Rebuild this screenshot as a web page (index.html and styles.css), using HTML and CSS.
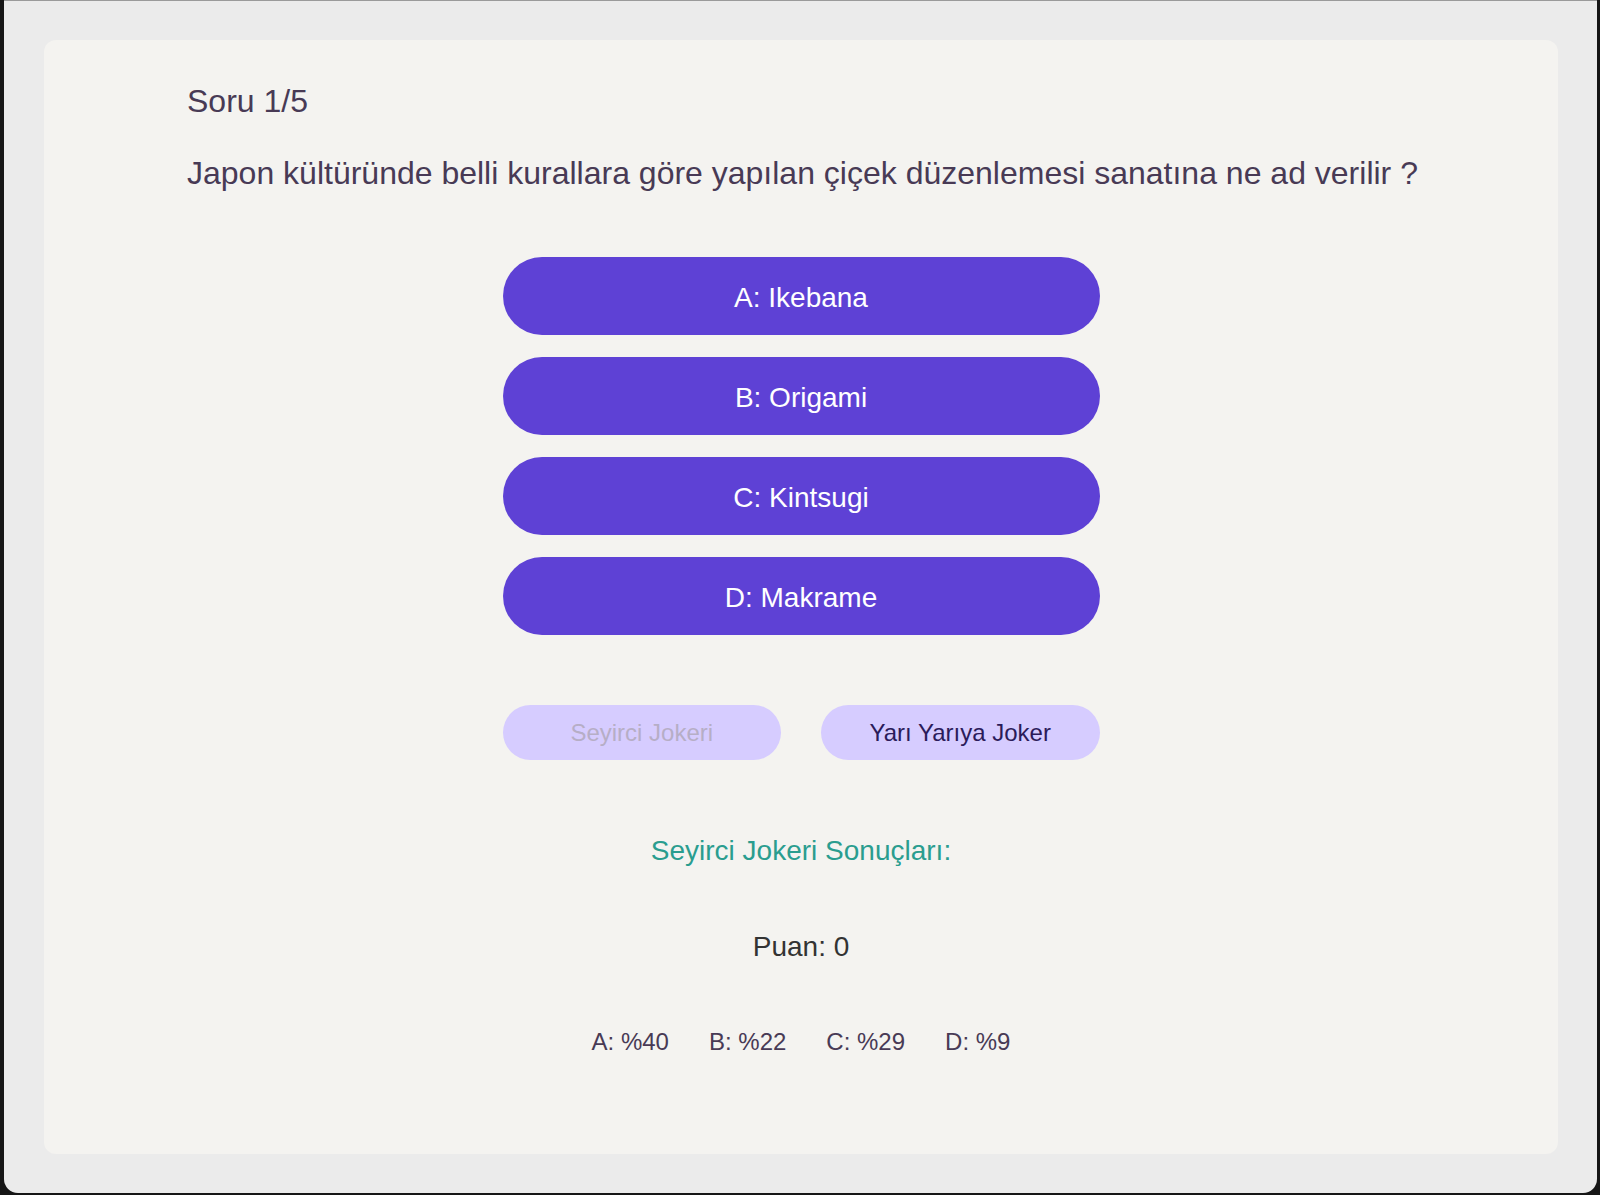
FILE: index.html
```html
<!DOCTYPE html>
<html lang="tr">
<head>
<meta charset="utf-8">
<title>Quiz</title>
<link rel="stylesheet" href="styles.css">
</head>
<body>
<div class="window">
  <main class="card">
    <div class="quiz">
      <h2 class="counter">Soru 1/5</h2>
      <p class="question">Japon kültüründe belli kurallara göre yapılan çiçek düzenlemesi sanatına ne ad verilir ?</p>
      <div class="answers">
        <button class="answer">A: Ikebana</button>
        <button class="answer">B: Origami</button>
        <button class="answer">C: Kintsugi</button>
        <button class="answer">D: Makrame</button>
      </div>
      <div class="jokers">
        <button class="joker joker-used" disabled>Seyirci Jokeri</button>
        <button class="joker">Yarı Yarıya Joker</button>
      </div>
      <h3 class="results-title">Seyirci Jokeri Sonuçları:</h3>
      <p class="score">Puan: 0</p>
      <div class="results">
        <span class="result">A: %40</span>
        <span class="result">B: %22</span>
        <span class="result">C: %29</span>
        <span class="result">D: %9</span>
      </div>
    </div>
  </main>
</div>
</body>
</html>
```
FILE: styles.css
```css
* {
  box-sizing: border-box;
}

html, body {
  margin: 0;
  padding: 0;
  height: 1195px;
  overflow: hidden;
}

body {
  background: #161616;
  font-family: "Liberation Sans", Arial, sans-serif;
}

.window {
  margin: 0 3px 0 4px;
  height: 1193px;
  background: #ebebeb;
  border-top: 1px solid #9a9a9a;
  border-radius: 0 0 14px 14px;
  padding: 39px 39px 39px 40px;
  display: flex;
}

.card {
  flex: 1;
  min-width: 0;
  background: #f4f3f0;
  border-radius: 12px;
  padding: 43px 143px 0 143px;
}

.quiz {
  min-width: 0;
  display: flex;
  flex-direction: column;
}

.counter {
  margin: 0;
  font-size: 32px;
  line-height: 36px;
  font-weight: normal;
  color: #483a55;
}

.question {
  margin: 36px 0 0;
  font-size: 32px;
  line-height: 36px;
  color: #483a55;
  white-space: nowrap;
}

.answers {
  margin-top: 66px;
  align-self: center;
  width: 597px;
  display: flex;
  flex-direction: column;
  gap: 22px;
}

.answer {
  height: 78px;
  border: none;
  border-radius: 40px;
  background: #5e41d5;
  color: #ffffff;
  font-family: inherit;
  font-size: 28px;
  padding: 3px 0 0;
  display: flex;
  align-items: center;
  justify-content: center;
}

.jokers {
  margin-top: 70px;
  align-self: center;
  width: 597px;
  display: flex;
  gap: 40px;
}

.joker {
  flex: 1;
  height: 55px;
  border: none;
  border-radius: 28px;
  background: #d6ccff;
  color: #2b1b5a;
  font-family: inherit;
  font-size: 24px;
  padding: 0;
}

.joker-used {
  color: #b6aec6;
}

.results-title {
  margin: 75px 0 0;
  text-align: center;
  font-size: 28px;
  line-height: 32px;
  font-weight: normal;
  color: #2a9d8f;
}

.score {
  margin: 64px 0 0;
  text-align: center;
  font-size: 28px;
  line-height: 32px;
  color: #333333;
}

.results {
  margin-top: 65px;
  display: flex;
  justify-content: center;
  gap: 40px;
}

.result {
  font-size: 24px;
  line-height: 28px;
  color: #483a55;
}
```
